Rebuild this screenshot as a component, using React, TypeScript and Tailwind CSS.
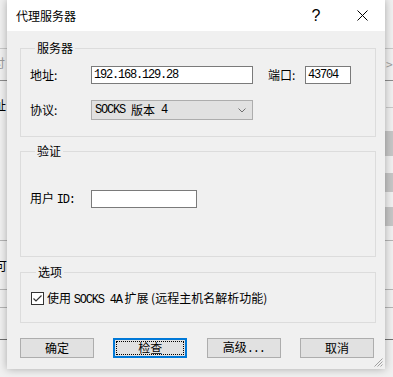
import React from 'react';

const cjk = "font-['Noto_Sans_CJK_SC','Liberation_Sans',sans-serif] text-[12px] leading-[16px] text-black";
const mono = "font-['Liberation_Mono','Noto_Sans_CJK_SC',monospace] text-[12px] tracking-[-1.2px]";

const GroupBox = ({ title, className, children }: { title: string; className: string; children: React.ReactNode }) => (
  <fieldset className={`border border-[#dcdcdc] ${className}`}>
    <legend className="ml-[5px] px-[2px] leading-[16px]">{title}</legend>
    {children}
  </fieldset>
);

const Button = ({ label, focused }: { label: React.ReactNode; focused?: boolean }) => (
  <div
    className={`w-[74px] h-[20px] flex items-center justify-center bg-[#e1e1e1] ${
      focused ? 'border-2 border-[#0078d7] p-[1px]' : 'border border-[#adadad]'
    }`}
  >
    {focused ? (
      <div className="w-full h-full flex items-center justify-center border border-dotted border-black">
        {label}
      </div>
    ) : (
      label
    )}
  </div>
);

export default function App() {
  return (
    <div className={`relative w-[393px] h-[377px] overflow-hidden bg-[#f0f0f0] ${cjk}`}>
      {/* window behind the dialog */}
      <div className="absolute left-0 top-[48px] w-[393px] h-px bg-[#c8c8c8]" />
      <div className="absolute left-0 top-[80px] w-[393px] h-px bg-[#8c8c8c]" />
      <div className="absolute left-[-7px] top-[55px] text-[#9a9a9a]">付</div>
      <div className="absolute left-[-6px] top-[97px]">址</div>
      <div className="absolute left-[386px] top-[56px] text-[#a0a0a0]">&gt;</div>
      <div className="absolute left-[386px] top-[107px] w-[7px] h-px bg-[#c8c8c8]" />
      <div className="absolute left-[385px] top-[131px] w-[8px] h-[25px] bg-[#c6c6c6]" />
      <div className="absolute left-[385px] top-[173px] w-[8px] h-[19px] bg-[#c6c6c6]" />
      <div className="absolute left-[385px] top-[207px] w-[8px] h-[19px] bg-[#c6c6c6]" />
      <div className="absolute left-0 top-[240px] w-[393px] h-px bg-[#b4b4b4]" />
      <div className="absolute left-[-5px] top-[258px]">可</div>
      <div className="absolute left-0 top-[289px] w-[393px] h-px bg-[#b4b4b4]" />
      <div className="absolute left-0 top-[307px] w-[393px] h-px bg-[#b4b4b4]" />
      <div className="absolute left-0 top-[339px] w-[393px] h-px bg-[#707070]" />

      {/* dialog */}
      <div className="absolute left-[7px] top-0 w-[378px] h-[369px] flex flex-col bg-[#f0f0f0] shadow-[0_0_8px_rgba(0,0,0,0.3)]">
        <div className="h-[31px] shrink-0 flex items-center bg-white pl-[9px]">
          <span className="text-[12px]">代理服务器</span>
          <div className="ml-auto flex h-full">
            <div className="w-[46px] h-full flex items-center justify-center font-['Liberation_Sans',sans-serif] text-[16px]">
              ?
            </div>
            <div className="w-[46px] h-full flex items-center justify-center">
              <svg width="11" height="11" viewBox="0 0 11 11">
                <path d="M0.5 0.5L10.5 10.5M10.5 0.5L0.5 10.5" stroke="#000" strokeWidth="1" />
              </svg>
            </div>
          </div>
        </div>

        <div className="flex flex-col pl-[13px] pr-[9px]">
          <GroupBox title="服务器" className="mt-[9px] pt-[10px] pb-[16px] pl-[9px]">
            <div className="flex items-center h-[18px]">
              <span className="w-[61px]">地址:</span>
              <div className={`w-[162px] h-[18px] border border-[#7a7a7a] bg-white pl-[2px] flex items-center ${mono}`}>
                192.168.129.28
              </div>
              <span className="ml-[15px] w-[37px]">端口:</span>
              <div className={`w-[46px] h-[18px] border border-[#7a7a7a] bg-white pl-[2px] flex items-center ${mono}`}>
                43704
              </div>
            </div>
            <div className="flex items-center h-[20px] mt-[16px]">
              <span className="w-[61px]">协议:</span>
              <div className="w-[162px] h-[20px] border border-[#adadad] bg-[#e1e1e1] pl-[3px] pr-[6px] flex items-center">
                <span className={mono}>SOCKS</span>
                <span className="ml-[6px]">版本</span>
                <span className={`ml-[6px] ${mono}`}>4</span>
                <svg className="ml-auto" width="8" height="5" viewBox="0 0 8 5">
                  <path d="M0.5 0.5L4 4L7.5 0.5" fill="none" stroke="#707070" strokeWidth="1" />
                </svg>
              </div>
            </div>
          </GroupBox>

          <GroupBox title="验证" className="mt-[6px] pt-[31px] pb-[48px] pl-[9px]">
            <div className="flex items-center h-[18px]">
              <span className="w-[61px]">
                用户 <span className={mono}>ID:</span>
              </span>
              <div className="w-[106px] h-[18px] border border-[#7a7a7a] bg-white" />
            </div>
          </GroupBox>

          <GroupBox title="选项" className="mt-[7px] pt-[12px] pb-[17px] pl-[10px]">
            <div className="flex items-center h-[13px] gap-[3px]">
              <div className="w-[13px] h-[13px] border border-[#333333] bg-white flex items-center justify-center">
                <svg width="9" height="7" viewBox="0 0 9 7">
                  <path d="M0.5 3.5L3 6L8.5 0.5" fill="none" stroke="#333333" strokeWidth="1.2" />
                </svg>
              </div>
              <span className="whitespace-nowrap">
                使用 <span className={mono}>SOCKS 4A</span> 扩展 (远程主机名解析功能)
              </span>
            </div>
          </GroupBox>

          <div className="mt-[15px] w-[354px] flex justify-between">
            <Button label="确定" />
            <Button label="检查" focused />
            <Button label={<span>高级<span className={mono}>...</span></span>} />
            <Button label="取消" />
          </div>
        </div>

        <svg className="absolute right-[2px] bottom-[2px]" width="10" height="10" viewBox="0 0 10 10">
          <path d="M9.5 1.5L1.5 9.5M9.5 4.5L4.5 9.5M9.5 7.5L7.5 9.5" stroke="#a0a0a0" strokeWidth="1" />
        </svg>
      </div>
    </div>
  );
}
